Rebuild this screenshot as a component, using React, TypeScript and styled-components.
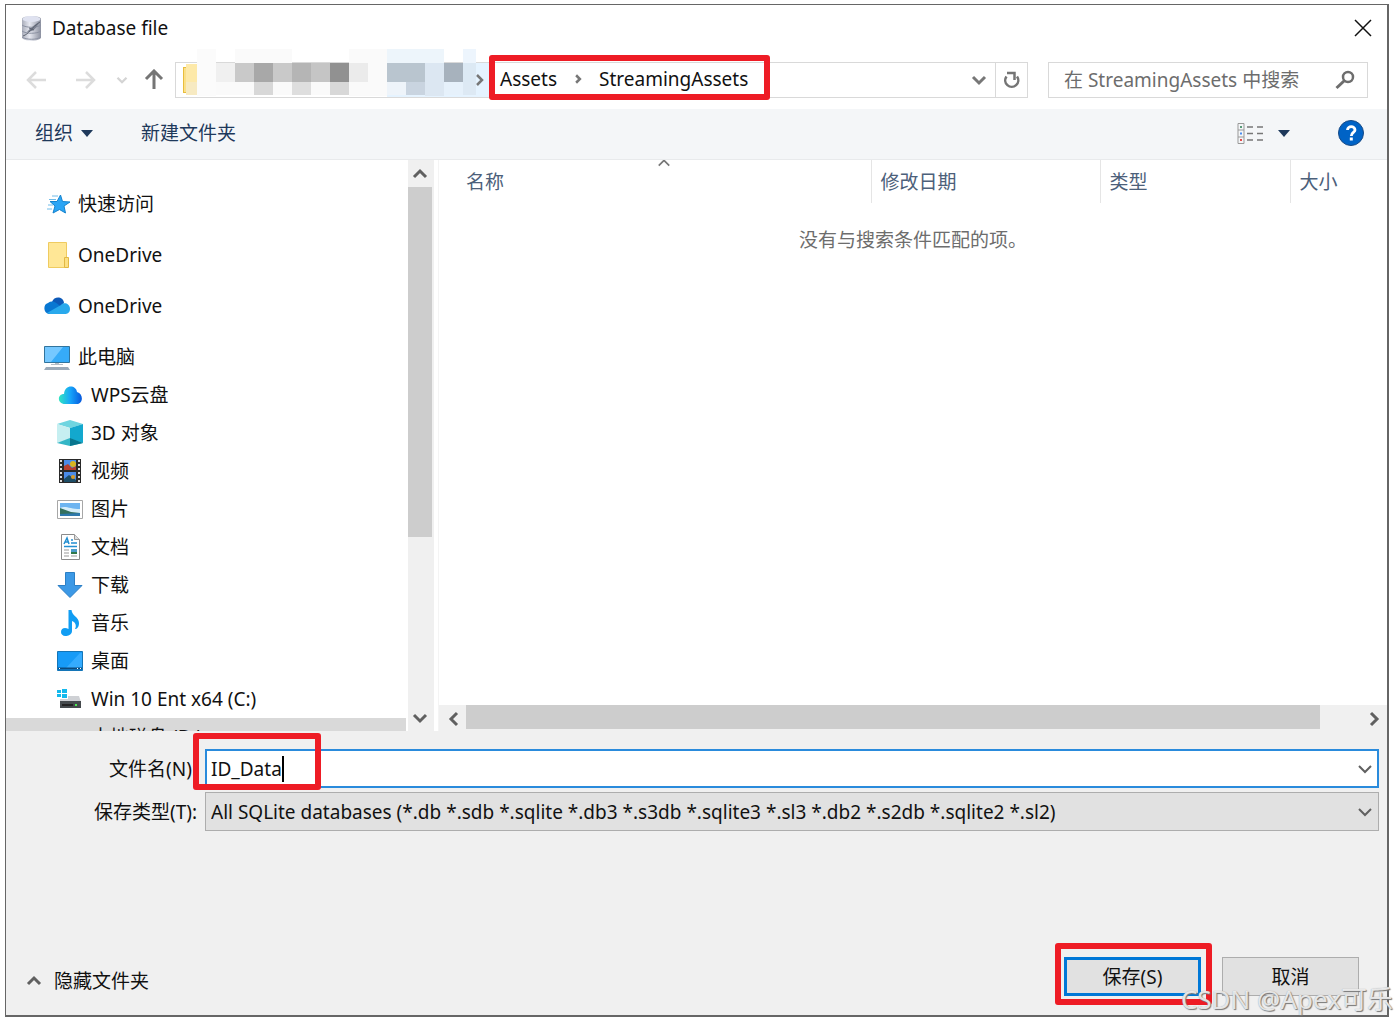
import React, { useState } from "react";
import styled, { createGlobalStyle, css } from "styled-components";

const GlobalStyle = createGlobalStyle`
  *, *::before, *::after { box-sizing: border-box; }
  body {
    margin: 0;
    background: #fff;
    color: #111;
    font: 19px/26px "Noto Sans", "Noto Sans CJK SC", sans-serif;
  }
  button, input, select { font: inherit; color: inherit; margin: 0; }
  svg { display: block; flex: none; }
`;

const highlight = css`
  content: "";
  position: absolute;
  border: 6px solid #ee1c25;
  border-radius: 3px;
  pointer-events: none;
  z-index: 2;
`;

const Page = styled.div`
  height: 100vh;
  min-height: 640px;
  padding: 4px 8px 5px 5px;
  position: relative;
  overflow: hidden;
`;

const Dialog = styled.main`
  height: 100%;
  display: flex;
  flex-direction: column;
  border: 1px solid #666;
  border-right-width: 2px;
  border-bottom-width: 2px;
  background: #f0f0f0;
`;

const PlainButton = styled.button`
  display: flex;
  align-items: center;
  justify-content: center;
  padding: 0;
  border: 0;
  background: none;
`;

const TitleBar = styled.header`
  display: flex;
  align-items: center;
  gap: 10px;
  height: 46px;
  padding: 0 15px;
  background: #fff;
`;

const Title = styled.h1`
  flex: 1;
  margin: 0;
  font-size: 19px;
  font-weight: 400;
`;

const NavBar = styled.nav`
  display: flex;
  align-items: center;
  gap: 20px;
  height: 58px;
  padding: 0 19px 0 20px;
  background: #fff;
`;

const NavButtons = styled.div`
  display: flex;
  align-items: center;
  gap: 26px;
  width: 129px;
`;

const ButtonCluster = styled.div<{ $gap?: number }>`
  display: flex;
  align-items: center;
  gap: ${(p) => p.$gap ?? 18}px;
`;

const AddressBar = styled.div`
  flex: 1;
  display: flex;
  height: 36px;
  border: 1px solid #d9d9d9;
`;

const HiddenPath = styled.div`
  position: relative;
  width: 314px;
  svg { position: absolute; left: 0; bottom: 0; }
`;

const Crumbs = styled.div`
  position: relative;
  display: flex;
  align-items: center;
  gap: 16px;
  padding: 0 22px 3px 10px;
  &::after { ${highlight} inset: -8px 0 -3px -1px; }
`;

const AddressSpace = styled.div`
  flex: 1;
`;

const AddressButton = styled(PlainButton)<{ $divided?: boolean }>`
  width: 32px;
  border-left: ${(p) => (p.$divided ? "1px solid #d9d9d9" : "0")};
`;

const SearchBox = styled.label`
  display: flex;
  align-items: center;
  width: 320px;
  height: 36px;
  padding: 0 12px 0 15px;
  border: 1px solid #d9d9d9;
`;

const SearchInput = styled.input`
  flex: 1;
  min-width: 0;
  padding: 0;
  border: 0;
  outline: 0;
  background: none;
  &::placeholder { color: #6d6d6d; opacity: 1; }
`;

const Toolbar = styled.div`
  display: flex;
  align-items: center;
  height: 51px;
  padding: 0 23px 2px 29px;
  gap: 48px;
  background: #f4f6f8;
  border-bottom: 1px solid #e8eaec;
  color: #1e395b;
`;

const ToolButton = styled(PlainButton)`
  gap: 8px;
`;

const ToolSpace = styled.div`
  flex: 1;
`;

const Content = styled.div`
  flex: 1;
  min-height: 0;
  display: flex;
  background: #fff;
`;

const Tree = styled.div`
  width: 400px;
  padding-top: 25px;
  display: flex;
  flex-direction: column;
  gap: 13px;
  overflow: hidden;
`;

const TreeGroup = styled.ul`
  margin: 0;
  padding: 0;
  list-style: none;
`;

const TreeItem = styled.li<{ $nested?: boolean; $selected?: boolean }>`
  display: flex;
  align-items: center;
  gap: 8px;
  height: 38px;
  padding-left: ${(p) => (p.$nested ? 51 : 38)}px;
  background: ${(p) => (p.$selected ? "#d9d9d9" : "transparent")};
`;

const VerticalScroll = styled.div`
  display: flex;
  flex-direction: column;
  width: 26px;
  margin: 0 4px 0 2px;
  padding-right: 2px;
  background: #f0f0f0;
`;

const ScrollButton = styled(PlainButton)`
  flex: none;
  width: 24px;
  height: 27px;
`;

const VerticalThumb = styled.div`
  height: 350px;
  background: #cdcdcd;
`;

const ScrollSpace = styled.div`
  flex: 1;
`;

const FilePane = styled.section`
  flex: 1;
  min-width: 0;
  display: flex;
  flex-direction: column;
  border-left: 1px solid #f4f4f4;
`;

const FileArea = styled.div`
  flex: 1;
  min-height: 0;
  overflow: hidden;
`;

const FileTable = styled.table`
  width: 100%;
  table-layout: fixed;
  border-collapse: collapse;
`;

const HeaderCell = styled.th<{ $width?: number; $first?: boolean }>`
  position: relative;
  width: ${(p) => (p.$width ? `${p.$width}px` : "auto")};
  height: 43px;
  padding: 0 0 0 ${(p) => (p.$first ? 27 : 9)}px;
  border-right: ${(p) => (p.$width ? "1px solid #e5e5e5" : "0")};
  color: #4c607a;
  font-weight: 400;
  text-align: left;
`;

const SortMark = styled.span`
  position: absolute;
  top: -4px;
  left: calc(50% + 2px);
`;

const EmptyCell = styled.td`
  padding: 24px 0 0;
  color: #6d6d6d;
  text-align: center;
`;

const HorizontalScroll = styled.div`
  display: flex;
  height: 26px;
  padding: 0 1px 2px 3px;
  background: #f0f0f0;
`;

const HorizontalThumb = styled.div`
  flex: 1;
  margin-right: 42px;
  background: #cdcdcd;
`;

const Form = styled.form`
  display: flex;
  flex-direction: column;
  gap: 126px;
  padding: 18px 0 19px;
`;

const Fields = styled.div`
  display: grid;
  grid-template-columns: 191px 1fr;
  gap: 4px 8px;
  align-items: center;
  padding-right: 8px;
`;

const FieldLabel = styled.label`
  text-align: right;
`;

const NameBox = styled.div`
  position: relative;
  display: flex;
  align-items: center;
  height: 39px;
  padding-left: 4px;
  border: 2px solid #2a8bdc;
  background: #fff;
  &::after { ${highlight} left: -14px; top: -18px; width: 128px; height: 57px; }
`;

const NameInput = styled.input`
  field-sizing: content;
  padding: 0;
  border: 0;
  outline: 0;
  background: none;
`;

const Caret = styled.span`
  width: 2px;
  height: 26px;
  background: #000;
`;

const DropButton = styled(PlainButton)`
  width: 24px;
  height: 100%;
  margin-left: auto;
`;

const TypeBox = styled.div`
  display: grid;
  align-items: center;
  height: 39px;
  border: 1px solid #adadad;
  background: #e1e1e1;
  > * { grid-area: 1 / 1; }
  svg { justify-self: end; margin-right: 5px; pointer-events: none; }
`;

const TypeSelect = styled.select`
  appearance: none;
  width: 100%;
  height: 100%;
  padding: 0 30px 0 5px;
  border: 0;
  outline: 0;
  background: none;
`;

const Footer = styled.footer`
  display: flex;
  align-items: flex-end;
  gap: 21px;
  padding: 0 28px 0 20px;
`;

const FolderToggle = styled(PlainButton)`
  gap: 12px;
  height: 30px;
  margin-right: auto;
`;

const ActionButton = styled.button<{ $primary?: boolean }>`
  position: relative;
  width: 137px;
  height: 39px;
  padding: 0;
  border: ${(p) => (p.$primary ? "3px solid #0078d7" : "1px solid #adadad")};
  background: #e1e1e1;
  ${(p) => p.$primary && css`&::after { ${highlight} inset: -17px -14px -12px -12px; }`}
`;

const Watermark = styled.div`
  position: absolute;
  right: 4px;
  bottom: 6px;
  z-index: 3;
  color: rgba(255, 255, 255, 0.8);
  font-size: 26px;
  line-height: 34px;
  text-shadow: 1px 1px 1px #777, 0 0 1px #999;
  white-space: nowrap;
  pointer-events: none;
`;

type ChevronProps = { dir?: "up" | "down" | "left" | "right"; w?: number; color?: string; size?: number };

const chevronPaths = {
  up: "M2 11L8 5L14 11",
  down: "M2 5L8 11L14 5",
  left: "M11 2L5 8L11 14",
  right: "M5 2L11 8L5 14",
};

const Chevron = ({ dir = "down", w = 2, color = "#606060", size = 16 }: ChevronProps) => (
  <svg width={size} height={size} viewBox="0 0 16 16" fill="none" stroke={color} strokeWidth={w}>
    <path d={chevronPaths[dir]} />
  </svg>
);

const Arrow = ({ dir, color }: { dir: "left" | "right" | "up"; color: string }) => {
  const turn = { left: 0, up: 90, right: 180 }[dir];
  return (
    <svg width="22" height="22" viewBox="0 0 22 22" fill="none" stroke={color} strokeWidth={dir === "up" ? 3 : 2.5}>
      <path transform={`rotate(${turn} 11 11)`} d="M20 11H3M10 3L2 11L10 19" />
    </svg>
  );
};

const Triangle = () => (
  <svg width="12" height="7" viewBox="0 0 12 7"><path d="M0 0H12L6 7Z" fill="#1e395b" /></svg>
);

const DatabaseIcon = () => (
  <svg width="21" height="26" viewBox="0 0 21 26">
    <defs>
      <linearGradient id="drum" x2="1"><stop stopColor="#a9adba" /><stop offset=".4" stopColor="#e6e8f0" /><stop offset="1" stopColor="#8c91a0" /></linearGradient>
    </defs>
    <path d="M1 4C1 0 20 0 20 4V22C20 27 1 27 1 22Z" fill="url(#drum)" />
    <ellipse cx="10.500" cy="4" rx="9" ry="3" fill="#dfe2f0" />
    <path d="M1 10C5 13 16 13 20 10M1 16C5 19 16 19 20 16M1 22C5 25 16 25 20 22" fill="none" stroke="#8c92a2" />
    <path d="M3 20C6 17 10 12 18 7C16 13 12 17 6 17Z" fill="#7b8190" />
    <path d="M2 21C8 19 10 13 19 7M8 13L13 15" fill="none" stroke="#5d6371" />
  </svg>
);

/* x, y, width, height, colour of each blurred block in the path */
const mosaic: [number, number, number, number, string][] = [
  [21, 0, 19, 47, "#fbfbfb"], [59, 0, 57, 14, "#fafafa"], [173, 0, 38, 47, "#fafafa"],
  [211, 0, 57, 14, "#edf5fb"], [287, 0, 13, 14, "#edf5fd"],
  [10, 15, 11, 18, "#fde9a9"], [10, 33, 11, 13, "#f7eac2"],
  [40, 14, 19, 19, "#f0f0f0"], [59, 14, 19, 19, "#c9c9c9"], [78, 14, 19, 19, "#a8a8a8"],
  [97, 14, 19, 19, "#c9c9c9"], [116, 14, 19, 19, "#b5b5b5"], [135, 14, 19, 19, "#c5c5c5"],
  [154, 14, 19, 19, "#919191"], [173, 14, 19, 19, "#ebebeb"], [211, 14, 38, 19, "#b9c5cf"],
  [249, 14, 19, 33, "#dce7f2"], [268, 14, 19, 19, "#a7b2bd"], [287, 14, 13, 19, "#dce9f4"],
  [40, 33, 38, 13, "#fafafa"], [78, 33, 19, 13, "#d8d8d8"], [97, 33, 19, 13, "#fafafa"],
  [116, 33, 19, 13, "#dedede"], [135, 33, 19, 13, "#fafafa"], [154, 33, 19, 13, "#d8d8d8"],
  [211, 33, 19, 13, "#eef4fa"], [230, 33, 19, 13, "#c9d4e0"], [268, 33, 19, 13, "#e6f1fb"],
  [287, 33, 13, 13, "#dde9f4"],
];

const PathMosaic = () => (
  <svg width="314" height="48" viewBox="0 0 314 48" shapeRendering="crispEdges">
    <rect x="211" y="14" width="103" height="34" fill="#e5f3ff" />
    <rect x="7" y="18" width="4" height="25" fill="#fbe08a" stroke="#e8bd3c" />
    {mosaic.map(([x, y, w, h, fill]) => (
      <rect key={`${x}-${y}`} x={x} y={y} width={w} height={h} fill={fill} />
    ))}
    <path d="M301 26L306 31L301 36" fill="none" stroke="#777" strokeWidth="2.500" shapeRendering="auto" />
  </svg>
);

const Refresh = () => (
  <svg width="20" height="20" viewBox="0 0 20 20" fill="none" stroke="#757575" strokeWidth="2.500">
    <path d="M4.500 6.500A6.500 6.500 0 1 0 15 6.500M5 3H12.500V10" />
  </svg>
);

const SearchIcon = () => (
  <svg width="20" height="20" viewBox="0 0 20 20" fill="none" stroke="#6d6d6d" strokeWidth="2.500">
    <circle cx="13" cy="7" r="5" /><path d="M9.500 10.500L1.500 18" strokeWidth="3" />
  </svg>
);

const CloseIcon = () => (
  <svg width="18" height="18" viewBox="0 0 18 18" stroke="#111" strokeWidth="1.500"><path d="M1 1L17 17M17 1L1 17" /></svg>
);

const ViewIcon = () => (
  <svg width="27" height="21" viewBox="0 0 27 21" fill="none">
    <path d="M1 .5H7V20.500H1ZM1 7H7M1 14H7" stroke="#999" />
    <path d="M10 4H16M20 4H26M10 10.500H16M20 10.500H26M10 17H16M20 17H26" stroke="#777" strokeWidth="1.500" />
    <path d="M3 4H5" stroke="#579a78" strokeWidth="2" /><path d="M3 10.500H5" stroke="#4a8df0" strokeWidth="2" /><path d="M3 17H5" stroke="#e34b4b" strokeWidth="2" />
  </svg>
);

const HelpIcon = () => (
  <svg width="26" height="26" viewBox="0 0 26 26">
    <circle cx="13" cy="13" r="12.500" fill="#0063c6" stroke="#174a86" />
    <path d="M9.500 10C9.500 5.500 17 5.500 17 10C17 12.500 13.300 12.500 13.300 16" fill="none" stroke="#fff" strokeWidth="2.800" />
    <rect x="11.800" y="17.500" width="3" height="3" fill="#fff" />
  </svg>
);

const iconArt: Record<string, React.ReactNode> = {
  star: <><path d="M16.500 4L18.500 10.500L26 11L20 15L21.500 22L15.500 18.500L9 22L11 15L6 10.500L13 10.500Z" fill="#2ba5f5" stroke="#1583ce" /><path d="M8 5H14M5 8.500H12M4 14H9M3 18H8" stroke="#70bce9" /></>,
  folder: <><path d="M4.500.5H22.500V25.500H4.500Z" fill="#ffe796" stroke="#efcb60" /><path d="M20.500 15.500H24.500V25.500H20.500Z" fill="#fce083" stroke="#e2b844" /></>,
  cloud: <><path d="M8 9C10 3 19 3 20 10L10 20Z" fill="#0c59b8" /><path d="M5 21C-1 20 -1 11 4 10C8 7 12 9 16 13L10 21Z" fill="#0877d2" /><path d="M3 20L17 12C19 9 26 10 26 16C26 20 23 21 21 21H6Z" fill="#29a9ec" /></>,
  computer: <><path d="M.5 2.500H25.500V18.500H.5Z" fill="#36abf8" stroke="#31749d" /><path d="M1 3H19L7 18H1Z" fill="#75c8ff" /><path d="M11 19H15V20H19V21H7V20H11Z" fill="#b3bdc6" /><path d="M2 23H24L26 26H0Z" fill="#9baab9" /></>,
  wps: <><defs><linearGradient id="wps"><stop stopColor="#31e5c1" /><stop offset=".5" stopColor="#16a4fa" /><stop offset="1" stopColor="#0758dc" /></linearGradient></defs><path d="M8 22C0 22 0 12 7 12C8 2 19 3 20 10C27 12 26 22 20 22Z" fill="url(#wps)" /></>,
  cube: <><path d="M13 0L26 4L13 8L0 4Z" fill="#6fd5e0" /><path d="M0 4L13 8V19L0 23Z" fill="#c6eff1" /><path d="M26 4L13 8V19L26 23Z" fill="#13a8ce" /><path d="M0 23L13 18L26 23L13 26Z" fill="#34b6c6" /><path d="M13 18L26 23L13 26Z" fill="#08758e" /></>,
  video: <><path d="M2 1H24V25H2Z" fill="#292929" /><path d="M7 2H19V12H7ZM7 14H19V24H7Z" fill="#4b8be8" /><path d="M7 8L11 6L15 10L19 8V12H7Z" fill="#b63f31" /><circle cx="16" cy="6" r="3" fill="#d9b51f" /><path d="M7 21L12 17L19 22V24H7Z" fill="#1d4d66" /><circle cx="16" cy="19" r="2" fill="#d99b29" /><path d="M4 2V25M22 2V25" stroke="#ddd" strokeWidth="2" strokeDasharray="2 2" /></>,
  picture: <><path d="M.5 4.500H25.500V22.500H.5Z" fill="#fff" stroke="#a7a7a7" /><path d="M3 7H23V20H3Z" fill="#6db4f0" /><path d="M3 12C8 9 13 13 23 13V17H3Z" fill="#d5edf9" /><path d="M3 12L14 16L23 17V20H3Z" fill="#34705e" /><path d="M3 18L23 17V20H3Z" fill="#2e79ad" /></>,
  document: <><path d="M4.500.5H17.500L22.500 5.500V25.500H4.500Z" fill="#fff" stroke="#8b8b8b" /><path d="M17.500.5V5.500H22.500" fill="#ddd" stroke="#999" /><path d="M7 10L10 4L12 10M8 8H12M14 6H16M14 9H20M7 12.500H20" stroke="#238fd1" strokeWidth="1.500" fill="none" /><path d="M7 16H12M7 19H12M7 22H12M14 22H20" stroke="#999" /><path d="M14 15H20V20H14Z" fill="#4c9cca" /><path d="M14 18H20V20H14Z" fill="#31794b" /></>,
  download: <path d="M8.500.5H17.500V13.500H25L13 25.500L1 13.500H8.500Z" fill="#3c99e6" stroke="#2c7fc5" />,
  music: <path d="M11.500 0H14.500C15 6 22 7 22 13C22 17 20 19 18 19C20 15 18 12 15 11V21C15 27 4 28 4 22C4 18 8 17 11.500 19Z" fill="#119df3" />,
  desktop: <><path d="M.5 3.500H25.500V22.500H.5Z" fill="#179bf7" stroke="#1475b7" /><path d="M23 5L9 20H25V5Z" fill="#35acff" /><path d="M1 20.500H25" stroke="#0c4a7c" strokeWidth="2" /><path d="M2 20.500H3M20 20.500H21M23 20.500H24" stroke="#fff" /></>,
  drive: <><path d="M0 4H4V7H0ZM5 3H10V7H5ZM0 8H4V11H0ZM5 8H10V12H5Z" fill="#14b9ed" /><path d="M11 10H22L24 16H3V13H11Z" fill="#cfd1d5" /><path d="M3 15H24V22H3Z" fill="#454a4d" /><path d="M5 19H16" stroke="#222" strokeWidth="2" /><path d="M18 19H20" stroke="#4bea50" strokeWidth="2" /></>,
};

const TreeIcon = ({ name }: { name: string }) => (
  <svg width="26" height="26" viewBox="0 0 26 26" fill="none">{iconArt[name]}</svg>
);

const shortcuts = [
  { icon: "star", label: "快速访问" },
  { icon: "folder", label: "OneDrive" },
  { icon: "cloud", label: "OneDrive" },
];

const computerItems = [
  { icon: "wps", label: "WPS云盘" },
  { icon: "cube", label: "3D 对象" },
  { icon: "video", label: "视频" },
  { icon: "picture", label: "图片" },
  { icon: "document", label: "文档" },
  { icon: "download", label: "下载" },
  { icon: "music", label: "音乐" },
  { icon: "desktop", label: "桌面" },
  { icon: "drive", label: "Win 10 Ent x64 (C:)" },
];

export default function App() {
  const [name, setName] = useState("ID_Data");
  return (
    <Page>
      <GlobalStyle />
      <Dialog>
        <TitleBar>
          <DatabaseIcon />
          <Title>Database file</Title>
          <PlainButton aria-label="关闭"><CloseIcon /></PlainButton>
        </TitleBar>

        <NavBar>
          <NavButtons>
            <PlainButton aria-label="后退"><Arrow dir="left" color="#dcdcdc" /></PlainButton>
            <ButtonCluster $gap={20}>
              <PlainButton aria-label="前进"><Arrow dir="right" color="#dcdcdc" /></PlainButton>
              <ButtonCluster $gap={15}>
                <PlainButton aria-label="最近位置"><Chevron size={12} w={3} color="#d4d4d4" /></PlainButton>
                <PlainButton aria-label="上移"><Arrow dir="up" color="#757575" /></PlainButton>
              </ButtonCluster>
            </ButtonCluster>
          </NavButtons>
          <AddressBar>
            <HiddenPath><PathMosaic /></HiddenPath>
            <Crumbs>
              <PlainButton>Assets</PlainButton>
              <Chevron dir="right" size={10} w={4} color="#777" />
              <PlainButton>StreamingAssets</PlainButton>
            </Crumbs>
            <AddressSpace />
            <AddressButton aria-label="展开地址"><Chevron w={3} color="#777" /></AddressButton>
            <AddressButton aria-label="刷新" $divided><Refresh /></AddressButton>
          </AddressBar>
          <SearchBox>
            <SearchInput aria-label="搜索" placeholder="在 StreamingAssets 中搜索" />
            <SearchIcon />
          </SearchBox>
        </NavBar>

        <Toolbar>
          <ToolButton>组织<Triangle /></ToolButton>
          <ToolButton>新建文件夹</ToolButton>
          <ToolSpace />
          <ButtonCluster $gap={14}>
            <PlainButton aria-label="视图"><ViewIcon /></PlainButton>
            <PlainButton aria-label="更多视图"><Triangle /></PlainButton>
          </ButtonCluster>
          <PlainButton aria-label="帮助"><HelpIcon /></PlainButton>
        </Toolbar>

        <Content>
          <Tree>
            {shortcuts.map((s) => (
              <TreeGroup key={s.icon}>
                <TreeItem><TreeIcon name={s.icon} />{s.label}</TreeItem>
              </TreeGroup>
            ))}
            <TreeGroup>
              <TreeItem><TreeIcon name="computer" />此电脑</TreeItem>
              {computerItems.map((s) => (
                <TreeItem key={s.icon} $nested><TreeIcon name={s.icon} />{s.label}</TreeItem>
              ))}
              <TreeItem $nested $selected><TreeIcon name="" />本地磁盘 (D:)</TreeItem>
            </TreeGroup>
          </Tree>
          <VerticalScroll>
            <ScrollButton aria-label="向上滚动"><Chevron dir="up" w={3} /></ScrollButton>
            <VerticalThumb />
            <ScrollSpace />
            <ScrollButton aria-label="向下滚动"><Chevron w={3} /></ScrollButton>
          </VerticalScroll>
          <FilePane>
            <FileArea>
              <FileTable>
                <thead>
                  <tr>
                    <HeaderCell $width={432} $first>名称<SortMark><Chevron dir="up" w={2} size={14} color="#777" /></SortMark></HeaderCell>
                    <HeaderCell $width={229}>修改日期</HeaderCell>
                    <HeaderCell $width={190}>类型</HeaderCell>
                    <HeaderCell>大小</HeaderCell>
                  </tr>
                </thead>
                <tbody>
                  <tr><EmptyCell colSpan={4}>没有与搜索条件匹配的项。</EmptyCell></tr>
                </tbody>
              </FileTable>
            </FileArea>
            <HorizontalScroll>
              <ScrollButton aria-label="向左滚动"><Chevron dir="left" w={3} /></ScrollButton>
              <HorizontalThumb />
              <ScrollButton aria-label="向右滚动"><Chevron dir="right" w={3} /></ScrollButton>
            </HorizontalScroll>
          </FilePane>
        </Content>

        <Form onSubmit={(e) => e.preventDefault()}>
          <Fields>
            <FieldLabel htmlFor="file-name">文件名(N):</FieldLabel>
            <NameBox>
              <NameInput id="file-name" value={name} onChange={(e) => setName(e.target.value)} />
              <Caret />
              <DropButton type="button" aria-label="历史文件名"><Chevron /></DropButton>
            </NameBox>
            <FieldLabel htmlFor="file-type">保存类型(T):</FieldLabel>
            <TypeBox>
              <TypeSelect id="file-type">
                <option>All SQLite databases (*.db *.sdb *.sqlite *.db3 *.s3db *.sqlite3 *.sl3 *.db2 *.s2db *.sqlite2 *.sl2)</option>
              </TypeSelect>
              <Chevron />
            </TypeBox>
          </Fields>
          <Footer>
            <FolderToggle type="button"><Chevron dir="up" w={3} />隐藏文件夹</FolderToggle>
            <ActionButton $primary>保存(S)</ActionButton>
            <ActionButton type="button">取消</ActionButton>
          </Footer>
        </Form>
      </Dialog>
      <Watermark>CSDN @Apex可乐</Watermark>
    </Page>
  );
}
